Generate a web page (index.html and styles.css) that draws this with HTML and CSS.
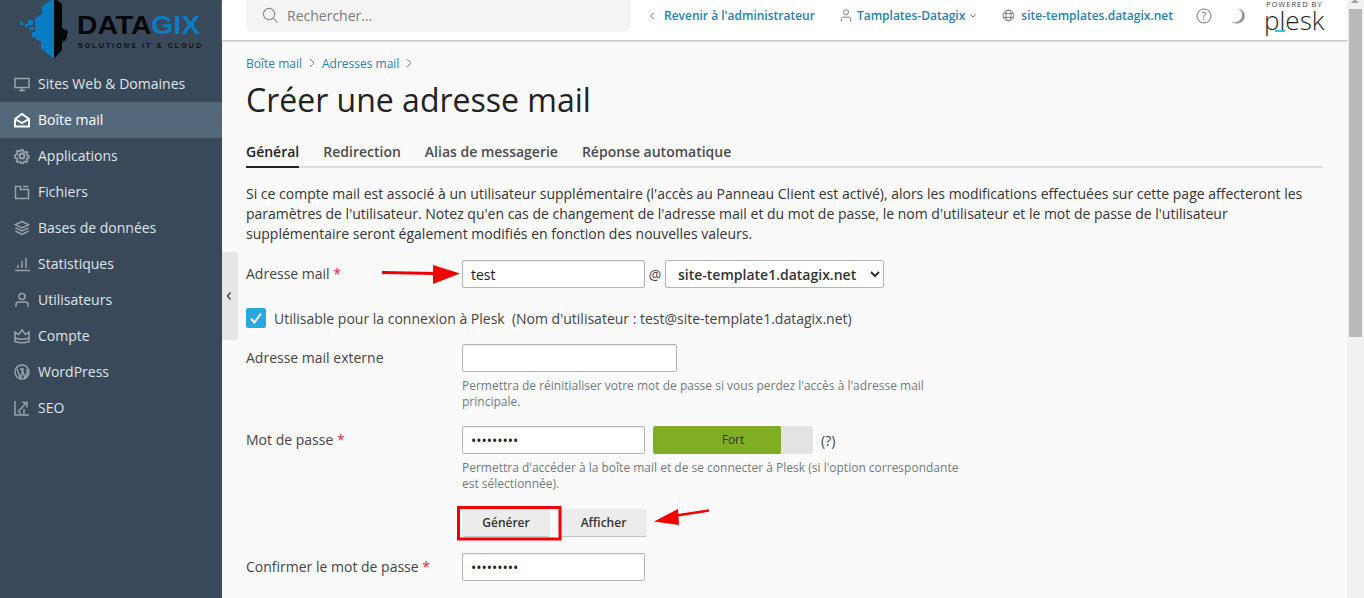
FILE: index.html
```html
<!DOCTYPE html>
<html lang="fr">
<head>
<meta charset="utf-8">
<title>Créer une adresse mail</title>
<link rel="stylesheet" href="styles.css">
</head>
<body>
<div class="app">
  <aside class="sidebar">
    <div class="logo">
      <svg width="222" height="66" viewBox="0 0 222 66">
        <polygon points="54,-2 42,6 42,14 35,18 35,38 41,42 41,48 54,59" fill="#0a7cc4"/>
        <polygon points="54,-2 62,4 62,28 68,31 66,40 62,42 62,50 54,59" fill="#050608"/>
        <g fill="#0a7cc4"><rect x="20" y="22" width="3" height="3"/><rect x="25" y="24" width="3" height="3"/><rect x="28" y="20" width="5" height="5"/><rect x="30" y="27" width="4" height="3"/><rect x="32" y="32" width="5" height="5"/></g>
        <text class="logo-name" x="77" y="34" textLength="123" lengthAdjust="spacingAndGlyphs"><tspan fill="#06070a">DATA</tspan><tspan fill="#0a7cc4">GIX</tspan></text>
        <text class="logo-sub" x="78" y="48" textLength="123">SOLUTIONS IT &amp; CLOUD</text>
      </svg>
    </div>
    <nav class="nav">
      <a class="nav-item"><svg class="ico" viewBox="0 0 16 16"><path d="M1 2.500h14v9H1zM5 14.500h6M8 11.500v3"/></svg><span class="nav-text">Sites Web &amp; Domaines</span></a>
      <a class="nav-item active"><svg class="ico" viewBox="0 0 16 16"><path d="M1 7l7-5 7 5v7.500H1z"/><path d="M1 7l7 4 7-4"/></svg><span class="nav-text">Boîte mail</span></a>
      <a class="nav-item"><svg class="ico ico-gear" viewBox="0 0 16 16"><path d="M6.800 1h2.400l.4 2 1.500.7 1.800-1.100 1.600 1.600-1.100 1.800.7 1.500 2 .4v2.400l-2 .4-.7 1.500 1.100 1.800-1.600 1.600-1.800-1.100-1.500.7-.4 2H6.800l-.4-2-1.500-.7-1.800 1.100-1.600-1.600 1.100-1.800-.7-1.500-2-.4V6.700l2-.4.7-1.500-1.100-1.800 1.600-1.600 1.800 1.100 1.500-.7z" transform="translate(1.300 1.300) scale(.84)"/><circle cx="8" cy="8" r="2.500"/></svg><span class="nav-text">Applications</span></a>
      <a class="nav-item"><svg class="ico" viewBox="0 0 16 16"><path d="M1.500 2.500h5v3h8v9h-13zM9 2.500h5.500"/></svg><span class="nav-text">Fichiers</span></a>
      <a class="nav-item"><svg class="ico" viewBox="0 0 16 16"><path d="M8 1.500l6.500 3.200L8 8 1.500 4.700z"/><path d="M1.500 7.800L8 11l6.500-3.200M1.500 11L8 14.500l6.500-3.500"/></svg><span class="nav-text">Bases de données</span></a>
      <a class="nav-item"><svg class="ico" viewBox="0 0 16 16"><path d="M1 14.500h15M4 12V9M8 12V5M12 12V2"/></svg><span class="nav-text">Statistiques</span></a>
      <a class="nav-item"><svg class="ico" viewBox="0 0 16 16"><circle cx="8" cy="4.500" r="3"/><path d="M2 15v-2.500c0-1.500 1-2.500 2.500-2.500h7c1.500 0 2.500 1 2.500 2.500V15"/></svg><span class="nav-text">Utilisateurs</span></a>
      <a class="nav-item"><svg class="ico" viewBox="0 0 16 16"><path d="M1 4l3.500 2.500L8 2l3.500 4.500L15 4v9.500c-4 1.500-10 1.500-14 0zM1 10c4 1.500 10 1.500 14 0"/></svg><span class="nav-text">Compte</span></a>
      <a class="nav-item"><svg class="ico" viewBox="0 0 16 16"><circle cx="8" cy="8" r="7"/><path d="M3 5l3.500 9 2-6-1-3M6 5h4M8 5l3 9 2-5c.5-1.500 0-3-.5-4"/></svg><span class="nav-text">WordPress</span></a>
      <a class="nav-item"><svg class="ico" viewBox="0 0 16 16"><path d="M1 1v14h14M4 12l8-9M8 2.500h5v5M6 15v-3M10 15V9"/></svg><span class="nav-text">SEO</span></a>
    </nav>
  </aside>

  <div class="main">
    <header class="topbar">
      <div class="search">
        <svg class="search-ico" viewBox="0 0 18 18"><circle cx="7.500" cy="7.500" r="6"/><path d="M12 12l4.500 4.500"/></svg>
        <span>Rechercher...</span>
      </div>
      <div class="top-links">
        <a class="top-link back"><svg class="small-ico chev" viewBox="0 0 6 8"><path d="M4.500 1L1.500 4l3 3"/></svg>Revenir à l'administrateur</a>
        <a class="top-link user"><svg class="small-ico" viewBox="0 0 12 14"><circle cx="6" cy="3.500" r="2.700"/><path d="M1 13.500v-3c0-1 .7-1.700 1.700-1.700h6.600c1 0 1.700.7 1.700 1.700v3"/></svg>Tamplates-Datagix<svg class="caret" viewBox="0 0 8 6"><path d="M1.500 1.500L4 4l2.500-2.500"/></svg></a>
        <a class="top-link site"><svg class="small-ico globe" viewBox="0 0 14 14"><circle cx="7" cy="7" r="5.800"/><ellipse cx="7" cy="7" rx="2.800" ry="5.800"/><path d="M1.500 5h11M1.500 9h11"/></svg>site-templates.datagix.net</a>
      </div>
      <svg class="help" viewBox="0 0 16 16"><circle cx="8" cy="8" r="7"/><text x="8" y="11.500" text-anchor="middle" class="help-q">?</text></svg>
      <svg class="moon" viewBox="0 0 16 16"><path d="M9 1c3.500 2 4 7 2 10-2 3-6 4-9 3 4 3 10 1 12-3 2-5-1-9.500-5-10z"/></svg>
      <div class="plesk"><span class="plesk-top">POWERED BY</span><span class="plesk-name">plesk</span><span class="plesk-mark"></span></div>
    </header>

    <main class="content">
      <div class="crumbs">
        <a>Boîte mail</a><svg class="crumb-sep" viewBox="0 0 6 10"><path d="M1 1l4 4-4 4"/></svg>
        <a>Adresses mail</a><svg class="crumb-sep" viewBox="0 0 6 10"><path d="M1 1l4 4-4 4"/></svg>
      </div>
      <h1 class="title">Créer une adresse mail</h1>
      <div class="tabs">
        <a class="tab current">Général</a>
        <a class="tab">Redirection</a>
        <a class="tab">Alias de messagerie</a>
        <a class="tab">Réponse automatique</a>
      </div>
      <p class="intro">Si ce compte mail est associé à un utilisateur supplémentaire (l'accès au Panneau Client est activé), alors les modifications effectuées sur cette page affecteront les paramètres de l'utilisateur. Notez qu'en cas de changement de l'adresse mail et du mot de passe, le nom d'utilisateur et le mot de passe de l'utilisateur supplémentaire seront également modifiés en fonction des nouvelles valeurs.</p>

      <div class="row row-mail">
        <label class="label">Adresse mail <span class="req">*</span></label>
        <div class="field inline">
          <input class="input w183" type="text" value="test">
          <span class="at">@</span>
          <select class="select"><option>site-template1.datagix.net</option></select>
        </div>
      </div>

      <div class="check-row">
        <span class="check"><svg viewBox="0 0 20 20"><path d="M5 10.500l3.500 4L15 5.500"/></svg></span>
        <span>Utilisable pour la connexion à Plesk&nbsp; (Nom d'utilisateur : test@site-template1.datagix.net)</span>
      </div>

      <div class="row row-ext">
        <label class="label">Adresse mail externe</label>
        <div class="field">
          <input class="input w215" type="text">
          <p class="hint">Permettra de réinitialiser votre mot de passe si vous perdez l'accès à l'adresse mail principale.</p>
        </div>
      </div>

      <div class="row row-pass">
        <label class="label">Mot de passe <span class="req">*</span></label>
        <div class="field">
          <div class="inline">
            <input class="input w183" type="password" value="testtest1">
            <div class="meter"><div class="meter-fill" style="width:80%"></div><span class="meter-text">Fort</span></div>
            <span class="qmark">(?)</span>
          </div>
          <p class="hint">Permettra d'accéder à la boîte mail et de se connecter à Plesk (si l'option correspondante est sélectionnée).</p>
          <div class="buttons">
            <button class="btn gen">Générer</button>
            <button class="btn">Afficher</button>
          </div>
        </div>
      </div>

      <div class="row row-conf">
        <label class="label">Confirmer le mot de passe <span class="req">*</span></label>
        <div class="field"><input class="input w183" type="password" value="testtest1"></div>
      </div>
    </main>
  </div>

  <div class="collapser"><svg viewBox="0 0 6 10"><path d="M4.500 1.500L1.500 5l3 3.500"/></svg></div>
  <svg class="annot" width="1364" height="598" viewBox="0 0 1364 598">
    <path d="M382 272.500L436 273.500" stroke="#f00000" stroke-width="3"/>
    <polygon points="460,273.500 433,265 433,284" fill="#f00000"/>
    <path d="M670 516.500L709 510.500" stroke="#f00000" stroke-width="2.500"/>
    <polygon points="654,521.500 678,509 679,525" fill="#f00000"/>
    <rect x="458.500" y="507.500" width="101.500" height="31.500" fill="none" stroke="#f00000" stroke-width="3"/>
  </svg>
  <div class="scrollbar">
    <span class="sb-arrow"></span>
    <span class="sb-thumb"></span>
  </div>
</div>
</body>
</html>
```
FILE: styles.css
```css
* { box-sizing: border-box; }
html, body { margin: 0; height: 100%; overflow: hidden; }
body { font-family: "Open Sans", sans-serif; font-size: 14px; color: #222; background: #fafafa; }
.app { display: flex; width: 1364px; height: 598px; position: relative; overflow: hidden; }
a { color: inherit; text-decoration: none; }

.sidebar { flex: 0 0 222px; background: #3a4959; color: #dfe5ea; }
.logo { height: 66px; overflow: hidden; }
.logo svg { display: block; }
.logo-name { font: 700 25px "Liberation Sans", sans-serif; }
.logo-sub { font: 700 7px "Liberation Sans", sans-serif; fill: #0b0e14; }
.nav-item { display: flex; align-items: center; height: 36px; padding-left: 14px; font-size: 14px; gap: 8px; }
.nav-text { margin-top: -2px; }
.nav-item.active { background: #53687a; color: #fff; }
.ico { width: 16px; height: 16px; fill: none; stroke: #99a3ad; stroke-width: 1.500; flex: none; }
.ico-gear { stroke-width: 2; }
.active .ico { stroke: #fff; stroke-width: 2; }

.main { flex: 0 0 1125px; display: flex; flex-direction: column; }
.topbar { height: 41px; background: #fff; border-bottom: 1px solid #c9c9c9; box-shadow: 0 1px 1px #e2e2e2; display: flex; align-items: center; padding-left: 24px; }
.search { width: 384px; height: 32px; margin-top: -9px; background: #f4f4f4; border-radius: 0 0 6px 6px; display: flex; align-items: center; padding-left: 16px; gap: 8px; color: #7a7a7a; font-size: 14px; }
.search-ico { width: 17px; height: 17px; fill: none; stroke: #8a8a8a; stroke-width: 1.200; }
.top-links { display: flex; align-items: center; margin-left: 19px; font-size: 12px; font-weight: 600; color: #2583ad; }
.top-link { display: flex; align-items: center; margin-top: -9px; }
.small-ico { fill: none; stroke: #777; stroke-width: 1; width: 12px; height: 13px; margin-right: 5px; }
.small-ico.chev { width: 6px; height: 8px; margin-right: 9px; }
.small-ico.globe { width: 13px; height: 13px; margin-right: 6px; }
.caret { width: 8px; height: 6px; fill: none; stroke: #777; margin-left: 4px; }
.user { margin-left: 25px; }
.site { margin-left: 25px; }
.help { width: 16px; height: 16px; margin: -9px 0 0 23px; fill: none; stroke: #777; stroke-width: 1; }
.help-q { font: 400 10px "Open Sans", sans-serif; fill: #666; stroke: none; }
.moon { width: 16px; height: 16px; margin: -9px 0 0 18px; fill: #8e8e8e; stroke: #b5b5b5; stroke-width: .5; }
.plesk { margin-left: 17px; width: 62px; height: 40px; position: relative; color: #1d1d1d; }
.plesk-top { position: absolute; left: 3px; top: 0; font-size: 7.500px; letter-spacing: 1px; line-height: 8px; color: #444; white-space: nowrap; }
.plesk-name { position: absolute; left: 1px; top: 10px; font-size: 26px; line-height: 20px; font-weight: 300; }
.plesk-mark { position: absolute; left: 12px; top: 30px; width: 10px; height: 2px; background: #3cc3e6; }

.content { padding: 0 24px; flex: 1; }
.crumbs { display: flex; align-items: center; height: 18px; margin-top: 13px; font-size: 12px; color: #2583ad; }
.crumb-sep { width: 6px; height: 10px; margin: 0 7px; fill: none; stroke: #999; stroke-width: 1; }
.title { margin: 7px 0 0; font-size: 32px; line-height: 42px; font-weight: 400; color: #222; }
.tabs { display: flex; gap: 24px; margin-top: 16px; border-bottom: 2px solid #dedede; height: 31px; }
.tab { font-size: 14px; font-weight: 600; line-height: 22px; height: 31px; padding-top: 4px; color: #4b4b4b; }
.tab.current { color: #222; border-bottom: 2px solid #222; }
.intro { margin: 16px 0 0; line-height: 20px; font-size: 14px; color: #333; }

.row { display: grid; grid-template-columns: 216px 1fr; }
.label { color: #444; line-height: 20px; padding-top: 4px; }
.req { color: #d0294b; }
.field { min-width: 0; }
.inline { display: flex; align-items: center; }
.input { height: 28px; background: #fff; border: 1px solid #b5b5b5; border-radius: 2px; box-shadow: inset 0 1px 1px rgba(0, 0, 0, .08); padding: 0 8px; font: 14px "Open Sans", sans-serif; color: #222; display: block; }
.w183 { width: 183px; }
.w215 { width: 215px; }
.at { width: 20px; text-align: center; color: #444; }
.select { width: 219px; height: 28px; background: #fff; border: 1px solid #b5b5b5; border-radius: 2px; padding: 0 8px; font: 600 14px "Open Sans", sans-serif; color: #333; }
.row-mail { margin-top: 16px; }
.check-row { display: flex; align-items: center; gap: 8px; margin-top: 19px; height: 22px; color: #444; }
.check { width: 20px; height: 20px; background: #2aa7e0; border-radius: 2px; }
.check svg { display: block; fill: none; stroke: #fff; stroke-width: 2; }
.row-ext { margin-top: 15px; }
.row-pass { margin-top: 16px; }
.row-conf { margin-top: 16px; }
.hint { margin: 6px 0 0; width: 500px; font-size: 12px; line-height: 16px; color: #6f7a7f; }
.meter { display: grid; width: 160px; height: 28px; margin-left: 8px; background: #e3e3e3; border-radius: 2px; }
.meter-fill, .meter-text { grid-area: 1 / 1; }
.meter-fill { height: 28px; background: #7fae24; border-radius: 2px; }
.meter-text { text-align: center; font-size: 12px; line-height: 28px; color: #333; }
.qmark { margin-left: 8px; font-size: 14px; color: #444; }
.buttons { display: flex; margin-top: 17px; gap: 10px; width: 185px; }
.btn { flex: 1; height: 28px; border: 0; border-bottom: 1px solid #c4c4c4; border-radius: 2px; background: #ececec; font: 600 12px "Open Sans", sans-serif; color: #333; padding: 0; }
.btn.gen { flex: 0 0 88px; }

.collapser { position: absolute; left: 222px; top: 252px; width: 16px; height: 88px; background: #e6e6e6; border-radius: 0 4px 4px 0; display: flex; align-items: center; justify-content: center; }
.collapser svg { width: 6px; height: 10px; fill: none; stroke: #333; stroke-width: 1.200; transform: translateX(-1px); }
.annot { position: absolute; left: 0; top: 0; pointer-events: none; }
.scrollbar { position: absolute; right: 0; top: 0; width: 17px; height: 598px; background: #f1f1f1; }
.sb-arrow { position: absolute; left: 4px; top: -1px; border: 4px solid transparent; border-top: 0; border-bottom: 4px solid #a3a3a3; }
.sb-thumb { position: absolute; left: 2px; right: 2px; top: 9px; height: 328px; background: #b9b9b9; }
```
